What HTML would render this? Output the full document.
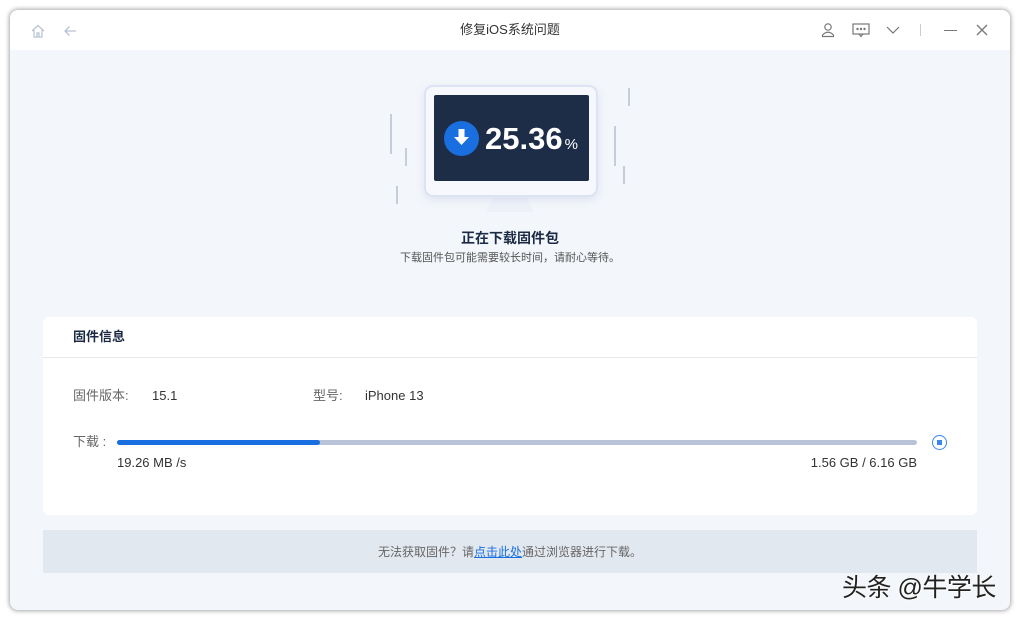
<!DOCTYPE html>
<html><head><meta charset="utf-8"><style>
*{margin:0;padding:0;box-sizing:border-box}
body{width:1020px;height:620px;background:#fff;font-family:"Liberation Sans","Noto Sans CJK SC",sans-serif;position:relative;overflow:hidden}
.win{position:absolute;left:10px;top:10px;width:1000px;height:600px;border-radius:8px;background:#f3f6fa;box-shadow:0 0 4px 1px rgba(0,0,0,.35);overflow:hidden}
.tb{position:absolute;left:0;top:0;width:1000px;height:40px;background:#fff}
.title{position:absolute;left:0;width:1000px;top:11px;text-align:center;font-size:13px;line-height:18px;color:#333}
.abs{position:absolute}
.card{position:absolute;left:33px;top:307px;width:934px;height:198px;background:#fff;border-radius:6px}
.t{position:absolute;font-size:13px;line-height:18px;color:#333;white-space:nowrap}
.g{color:#666}
</style></head><body>
<div class="win">
<div class="tb">
<svg class="abs" style="left:20px;top:13px" width="16" height="16" viewBox="0 0 16 16" fill="none" stroke="#b8c2d4" stroke-width="1.2"><path d="M2 8 L8 2.5 L14 8 M4 7 V14 H12 V7 M7 14 V10 H9 V14"/></svg>
<svg class="abs" style="left:52px;top:13px" width="16" height="16" viewBox="0 0 16 16" fill="none" stroke="#b8c2d4" stroke-width="1.3"><path d="M14 8 H3 M7.5 3.5 L3 8 L7.5 12.5"/></svg>
<div class="title">修复iOS系统问题</div>
<svg class="abs" style="left:811px;top:12px" width="14" height="16" viewBox="0 0 14 16" fill="none" stroke="#777" stroke-width="1.2"><circle cx="7" cy="5" r="3.2"/><path d="M1.5 14.5 V13 Q7 7.5 12.5 13 V14.5 Z"/></svg>
<svg class="abs" style="left:842px;top:13px" width="18" height="15" viewBox="0 0 18 15" fill="none" stroke="#777" stroke-width="1.2"><rect x="1" y="1" width="16" height="10"/><path d="M7 11 L9 13.5 L11 11"/><circle cx="5.5" cy="6" r=".6" fill="#777"/><circle cx="9" cy="6" r=".6" fill="#777"/><circle cx="12.5" cy="6" r=".6" fill="#777"/></svg>
<svg class="abs" style="left:876px;top:15px" width="14" height="10" viewBox="0 0 14 10" fill="none" stroke="#777" stroke-width="1.2"><path d="M1 2 L7 8 L13 2"/></svg>
<div class="abs" style="left:910px;top:14px;width:1px;height:12px;background:#ccc"></div>
<div class="abs" style="left:934px;top:20px;width:13px;height:1.3px;background:#777"></div>
<svg class="abs" style="left:965px;top:13px" width="14" height="14" viewBox="0 0 14 14" stroke="#777" stroke-width="1.3"><path d="M2 2 L12 12 M12 2 L2 12"/></svg>
</div>
<!-- monitor -->
<div class="abs" style="left:380px;top:104px;width:2px;height:40px;background:#c6ccd8"></div>
<div class="abs" style="left:395px;top:138px;width:2px;height:18px;background:#c6ccd8"></div>
<div class="abs" style="left:386px;top:176px;width:2px;height:18px;background:#c6ccd8"></div>
<div class="abs" style="left:618px;top:78px;width:2px;height:18px;background:#c6ccd8"></div>
<div class="abs" style="left:604px;top:116px;width:2px;height:40px;background:#c6ccd8"></div>
<div class="abs" style="left:613px;top:156px;width:2px;height:18px;background:#c6ccd8"></div>
<div class="abs" style="left:476px;top:188px;width:48px;height:14px;background:#eef1f8;clip-path:polygon(15% 0,85% 0,100% 100%,0 100%);"></div>
<div class="abs" style="left:416px;top:77px;width:170px;height:108px;background:#f7f8fd;border-radius:7px;box-shadow:0 0 0 2px #dde3f3,0 3px 10px rgba(120,140,200,.25)"></div>
<div class="abs" style="left:424px;top:85px;width:155px;height:86px;background:#1d2d48;border-radius:2px"></div>
<div class="abs" style="left:434px;top:111px;width:35px;height:35px;border-radius:50%;background:#1a6fe0"></div>
<svg class="abs" style="left:443px;top:118px" width="17" height="20" viewBox="0 0 17 20" fill="#fff"><rect x="5.5" y="1" width="6" height="9"/><path d="M1 9 H16 L8.5 17 Z"/></svg>
<div class="t" style="left:475px;top:111px;font-size:31px;line-height:36px;font-weight:bold;color:#fff">25.36<span style="font-size:15px;font-weight:normal;margin-left:2px">%</span></div>
<div class="t" style="left:0;width:1000px;text-align:center;top:219px;font-size:14px;font-weight:bold;color:#1b2a44">正在下载固件包</div>
<div class="t" style="left:0;width:1000px;text-align:center;top:239px;font-size:11px;color:#555">下载固件包可能需要较长时间，请耐心等待。</div>
<div class="card">
<div class="t" style="left:30px;top:11px;font-weight:bold;color:#1b2a44">固件信息</div>
<div class="abs" style="left:0;top:40px;width:934px;height:1px;background:#e4e9f1"></div>
<div class="t g" style="left:30px;top:70px">固件版本:</div>
<div class="t" style="left:109px;top:70px">15.1</div>
<div class="t g" style="left:270px;top:70px">型号:</div>
<div class="t" style="left:322px;top:70px">iPhone 13</div>
<div class="t g" style="left:30px;top:116px">下载 :</div>
<div class="abs" style="left:74px;top:123px;width:800px;height:5px;background:#b8c3d8;border-radius:3px"></div>
<div class="abs" style="left:74px;top:123px;width:203px;height:5px;background:#1a6fe0;border-radius:3px"></div>
<div class="t" style="left:74px;top:137px">19.26 MB /s</div>
<div class="t" style="right:60px;top:137px">1.56 GB / 6.16 GB</div>
<div class="abs" style="left:889px;top:118px;width:15px;height:15px;border:1.5px solid #3b86ef;border-radius:50%"></div>
<div class="abs" style="left:894px;top:123px;width:5px;height:5px;background:#3b86ef"></div>
</div>
<div class="abs" style="left:33px;top:520px;width:934px;height:43px;background:#e2e8f0"></div>
<div class="t" style="left:0;width:1000px;text-align:center;top:533px;font-size:12px;color:#666">无法获取固件？请<span style="color:#1a6fe0;text-decoration:underline">点击此处</span>通过浏览器进行下载。</div>
</div>
<div class="t" style="left:842px;top:573px;font-size:25px;line-height:30px;color:#222;letter-spacing:-0.5px;text-shadow:1px 1px 0 #fff,-1px 0 0 #fff">头条 @牛学长</div>
</body></html>
